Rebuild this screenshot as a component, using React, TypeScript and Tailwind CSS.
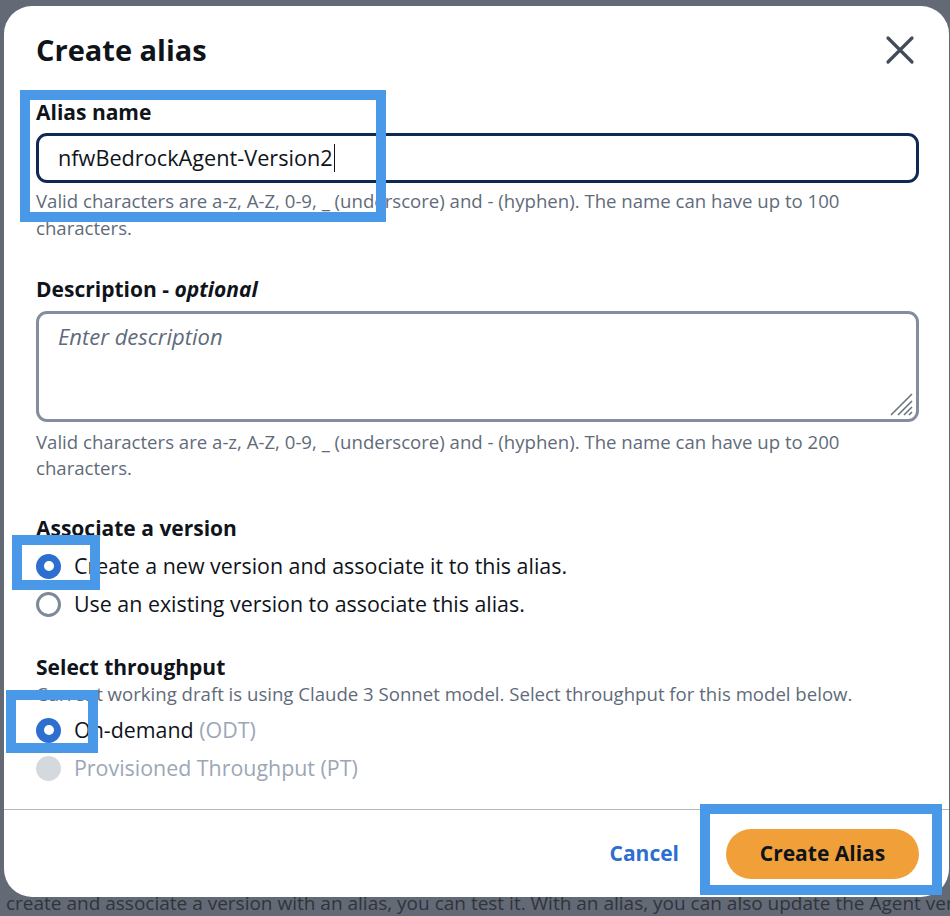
const FONT = { fontFamily: '"Open Sans", "Noto Sans", Arial, sans-serif' };

function Radio({ state }: { state: 'on' | 'off' | 'disabled' }) {
  if (state === 'on')
    return (
      <span className="flex size-[25px] shrink-0 items-center justify-center rounded-full bg-[#2c6fd0]">
        <span className="size-[10px] rounded-full bg-white" />
      </span>
    );
  if (state === 'disabled') return <span className="size-[25px] shrink-0 rounded-full bg-[#d5d8dd]" />;
  return <span className="size-[25px] shrink-0 rounded-full border-[3px] border-[#7d8998] bg-white" />;
}

// annotation boxes drawn over the screenshot
function Mark({ className }: { className: string }) {
  return <div className={'pointer-events-none absolute border-[10px] border-[#4a99e9] ' + className} />;
}

const label = 'text-[21px] font-bold leading-[26px] text-[#0f141a]';
const help = 'text-[18.6px] leading-[26px] text-[#5f6b7a]';

export default function App() {
  return (
    <div className="relative h-[916px] w-[950px] overflow-hidden bg-[#636a76]" style={FONT}>
      {/* page text behind the overlay */}
      <div className="absolute left-[6px] top-[889px] whitespace-nowrap text-[19px] text-[#2f343c]">
        create and associate a version with an alias, you can test it. With an alias, you can also update the Agent version
      </div>

      <div className="relative ml-[4px] mt-[6px] flex h-[891px] w-[945px] flex-col rounded-[28px] bg-white">
        <div className="flex items-center justify-between pl-[32px] pr-[34px] pt-[26px]">
          <h1 className="text-[29px] font-bold leading-[36px] text-[#0f141a]">Create alias</h1>
          <svg width="30" height="30" viewBox="0 0 30 30">
            <path d="M3 3 L27 27 M27 3 L3 27" stroke="#424c59" strokeWidth="3.2" strokeLinecap="round" />
          </svg>
        </div>

        <div className="flex flex-col pl-[32px] pr-[30px]">
          <label className={'mt-[31px] ' + label}>Alias name</label>
          <div className="mt-[8px] flex h-[50px] items-center rounded-[11px] border-[3px] border-[#0d2b52] pl-[19px]">
            <span className="text-[21.7px] text-[#0f141a]">nfwBedrockAgent-Version2</span>
            <span className="ml-[1px] h-[28px] w-[1.5px] bg-[#0f141a]" />
          </div>
          <p className={'mt-[4px] leading-[27px] ' + help}>
            Valid characters are a-z, A-Z, 0-9, _ (underscore) and - (hyphen). The name can have up to 100 characters.
          </p>

          <label className={'mt-[35px] ' + label}>
            Description - <i>optional</i>
          </label>
          <div className="relative mt-[9px] h-[111px] rounded-[11px] border-[3px] border-[#848d9b] pl-[19px] pt-[7px]">
            <span className="text-[22px] italic leading-[30px] text-[#5f6b7a]">Enter description</span>
            <svg className="absolute bottom-[2px] right-[2px]" width="26" height="26" viewBox="0 0 26 26">
              <path d="M3 24 L24 3 M10 24 L24 10 M16 24 L24 16 M21 24 L24 21" stroke="#6b7280" strokeWidth="1.6" />
            </svg>
          </div>
          <p className={'mt-[7px] ' + help}>
            Valid characters are a-z, A-Z, 0-9, _ (underscore) and - (hyphen). The name can have up to 200 characters.
          </p>

          <label className={'mt-[34px] ' + label}>Associate a version</label>
          <div className="mt-[12px] flex flex-col gap-[12px] text-[21.4px] leading-[26px] text-[#0f141a]">
            <div className="flex items-center gap-[13px]">
              <Radio state="on" />
              <span>Create a new version and associate it to this alias.</span>
            </div>
            <div className="flex items-center gap-[13px]">
              <Radio state="off" />
              <span>Use an existing version to associate this alias.</span>
            </div>
          </div>

          <label className={'mt-[37px] ' + label}>Select throughput</label>
          <p className={'mt-[1px] ' + help}>
            Current working draft is using Claude 3 Sonnet model. Select throughput for this model below.
          </p>
          <div className="mt-[10px] flex flex-col gap-[12px] text-[21.4px] leading-[26px]">
            <div className="flex items-center gap-[13px]">
              <Radio state="on" />
              <span className="text-[#0f141a]">
                On-demand <span className="text-[#9ba7b6]">(ODT)</span>
              </span>
            </div>
            <div className="flex items-center gap-[13px]">
              <Radio state="disabled" />
              <span className="text-[#9ba7b6]">Provisioned Throughput (PT)</span>
            </div>
          </div>
        </div>

        <div className="mt-auto border-t border-[#b6b6be]">
          <div className="flex h-[87px] items-center justify-end gap-[47px] pr-[30px]">
            <button type="button" className="text-[21px] font-bold text-[#2c6fd0]">
              Cancel
            </button>
            <button
              type="button"
              className="h-[50px] w-[193px] rounded-full bg-[#f1a039] text-[21px] font-bold text-[#0f141a]"
            >
              Create Alias
            </button>
          </div>
        </div>
      </div>

      <Mark className="left-[20px] top-[90px] h-[132px] w-[366px]" />
      <Mark className="left-[12px] top-[535px] h-[55px] w-[88px]" />
      <Mark className="left-[6px] top-[690px] h-[63px] w-[92px]" />
      <Mark className="left-[700px] top-[804px] h-[91px] w-[242px]" />
    </div>
  );
}
